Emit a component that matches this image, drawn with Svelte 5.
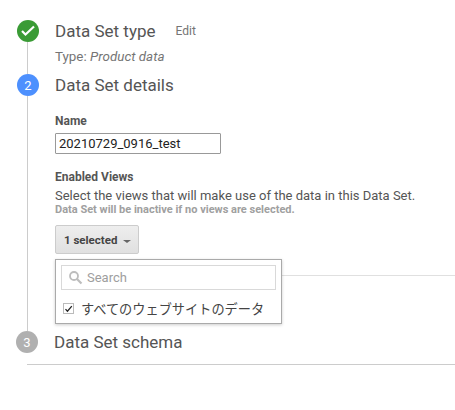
<script>
  let name = $state('20210729_0916_test');
  let viewChecked = $state(true);
</script>

<div class="stepper">
  <div class="step-head">
    <span class="badge done">
      <svg width="16" height="16" viewBox="0 0 16 16" aria-hidden="true">
        <path d="M2 8 5.5 11.5 14 3.5" fill="none" stroke="#fff" stroke-width="2.2" />
      </svg>
    </span>
    <h2>Data Set type</h2>
    <a class="edit" href="#edit">Edit</a>
  </div>
  <div class="step-body first">
    <p class="type">Type: <em>Product data</em></p>
  </div>

  <div class="step-head">
    <span class="badge active">2</span>
    <h2>Data Set details</h2>
  </div>
  <div class="step-body second">
    <label class="field-label" for="ds-name">Name</label>
    <input id="ds-name" class="name-input" bind:value={name} />

    <div class="field-label views-label">Enabled Views</div>
    <p class="help">Select the views that will make use of the data in this Data Set.</p>
    <p class="warn">Data Set will be inactive if no views are selected.</p>

    <div class="picker">
      <button class="picker-btn">1 selected <span class="caret"></span></button>
      <div class="menu">
        <div class="search">
          <svg width="15" height="15" viewBox="0 0 15 15" aria-hidden="true">
            <circle cx="6" cy="6" r="4" fill="none" stroke="#bdbdbd" stroke-width="1.8" />
            <path d="M9 9 13.5 13.5" stroke="#bdbdbd" stroke-width="2.2" />
          </svg>
          <span>Search</span>
        </div>
        <label class="option">
          <input type="checkbox" bind:checked={viewChecked} />
          <span class="box">
            {#if viewChecked}
              <svg width="12" height="12" viewBox="0 0 12 12" aria-hidden="true">
                <path d="M2 6.2 4.6 9 10.4 2.2" fill="none" stroke="#222" stroke-width="1.7" />
              </svg>
            {/if}
          </span>
          <span class="option-text">すべてのウェブサイトのデータ</span>
        </label>
      </div>
    </div>
    <hr class="inner-rule" />
  </div>

  <div class="step-head last">
    <span class="badge todo">3</span>
    <h2>Data Set schema</h2>
  </div>
  <hr class="end-rule" />
</div>

<style>
  :global(body) {
    background: #fff;
    font-family: Roboto, "Noto Sans CJK JP", sans-serif;
    color: #555;
  }

  .stepper {
    padding: 20px 0 0 17px;
    width: 438px;
    height: 390px;
    overflow: hidden;
  }

  .step-head {
    display: flex;
    align-items: center;
    height: 22px;
  }

  .step-head.last {
    margin-left: -1px;
  }

  .step-head h2 {
    margin: 0 0 0 16px;
    font-size: 17px;
    font-weight: 400;
    color: #555;
  }

  .badge {
    flex: none;
    display: flex;
    align-items: center;
    justify-content: center;
    width: 22px;
    height: 22px;
    border-radius: 50%;
    color: #fff;
    font-size: 13px;
  }

  .done { background: #3a9b35; }
  .active { background: #4d90fe; }
  .todo { background: #b0b0b0; }

  .edit {
    margin-left: 20px;
    font-size: 12px;
    color: #757575;
    text-decoration: none;
  }

  .step-body {
    margin-left: 10px;
    padding-left: 27px;
    border-left: 1px solid #ccc;
  }

  .step-body.first {
    height: 32px;
  }

  .type {
    margin: 0;
    padding-top: 7px;
    font-size: 13.4px;
    line-height: 16px;
    color: #757575;
  }

  .step-body.second {
    height: 235px;
    padding-top: 18px;
    box-sizing: border-box;
    position: relative;
  }

  .field-label {
    display: block;
    font-size: 12px;
    font-weight: 700;
    line-height: 14px;
    color: #555;
  }

  .name-input {
    display: block;
    box-sizing: border-box;
    width: 166px;
    height: 21px;
    margin-top: 5px;
    padding: 0 3px;
    border: 1px solid #999;
    border-radius: 1px;
    font: 13px Roboto, sans-serif;
    color: #222;
    outline: none;
  }

  .views-label {
    margin-top: 16px;
  }

  .help {
    margin: 4px 0 0;
    font-size: 13px;
    line-height: 15px;
    white-space: nowrap;
  }

  .warn {
    margin: 0;
    font-size: 11px;
    font-weight: 700;
    line-height: 13px;
    color: #a0a0a0;
    white-space: nowrap;
  }

  .picker {
    position: relative;
    margin-top: 9px;
  }

  .picker-btn {
    display: flex;
    align-items: center;
    box-sizing: border-box;
    width: 84px;
    height: 29px;
    padding: 0 0 0 8px;
    border: 1px solid #ccc;
    border-radius: 2px;
    background: linear-gradient(#eee, #e0e0e0);
    font: 700 11.5px Roboto, sans-serif;
    color: #444;
  }

  .caret {
    margin: 3px 0 0 6px;
    border-left: 4px solid transparent;
    border-right: 4px solid transparent;
    border-top: 3px solid #666;
  }

  .menu {
    position: absolute;
    z-index: 2;
    top: 34px;
    left: 0;
    box-sizing: border-box;
    width: 227px;
    height: 65px;
    padding: 5px;
    border: 1px solid #aaa;
    background: #fff;
    box-shadow: 0 1px 3px rgba(0, 0, 0, 0.2);
  }

  .search {
    display: flex;
    align-items: center;
    gap: 4px;
    box-sizing: border-box;
    height: 25px;
    padding-left: 6px;
    border: 1px solid #d9d9d9;
    font-size: 13px;
    color: #9e9e9e;
  }

  .option {
    display: flex;
    align-items: center;
    gap: 7px;
    margin: 9px 0 0 2px;
    font-size: 13px;
    color: #444;
  }

  .option-text {
    font-size: 13.2px;
  }

  .option input {
    display: none;
  }

  .box {
    display: flex;
    align-items: center;
    justify-content: center;
    box-sizing: border-box;
    width: 11px;
    height: 11px;
    border: 1px solid #bbb;
  }

  .inner-rule {
    margin: 21px -28px 0 0;
    border: 0;
    border-top: 1px solid #e0e0e0;
  }

  .end-rule {
    margin: 11px 0 0 10px;
    border: 0;
    border-top: 1px solid #ccc;
  }
</style>
